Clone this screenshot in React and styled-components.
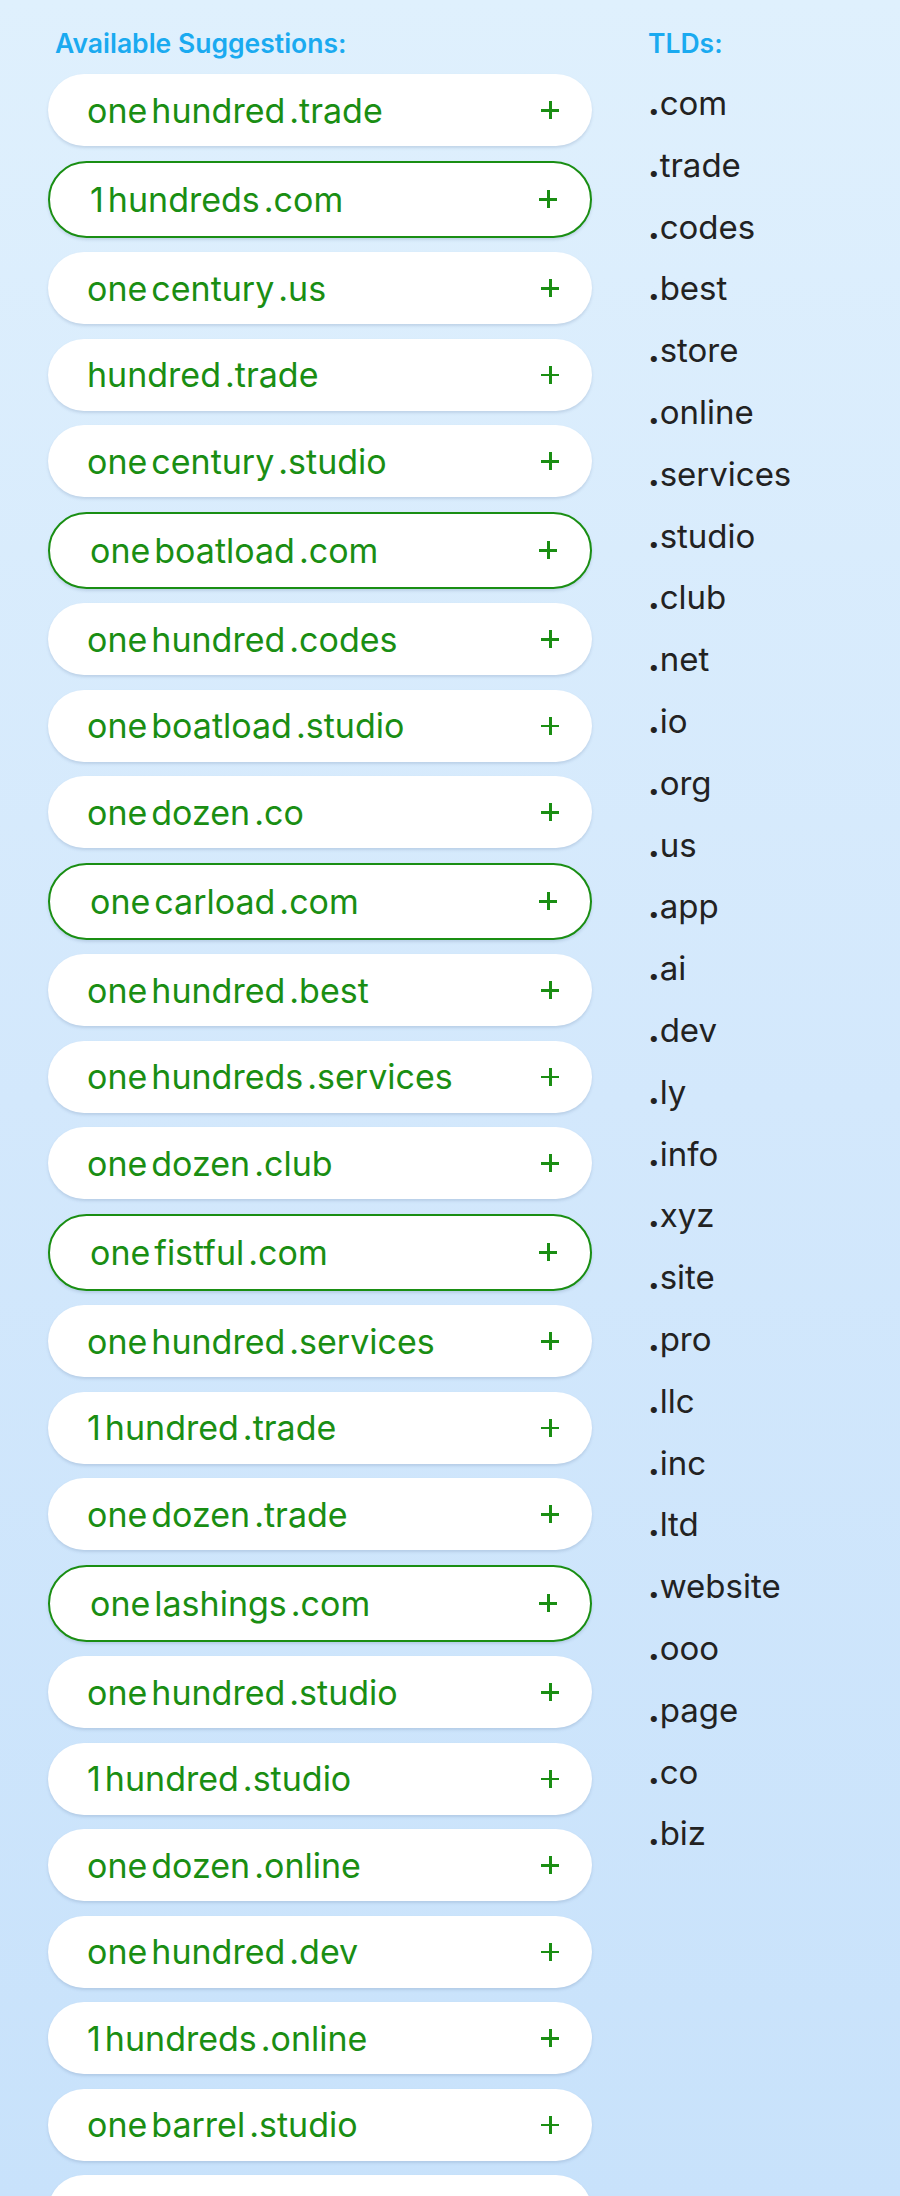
import React from 'react'
import styled, { createGlobalStyle } from 'styled-components'

const suggestions = [
  { parts: ['one', 'hundred', '.trade'] },
  { parts: ['1', 'hundreds', '.com'], picked: true },
  { parts: ['one', 'century', '.us'] },
  { parts: ['hundred', '.trade'] },
  { parts: ['one', 'century', '.studio'] },
  { parts: ['one', 'boatload', '.com'], picked: true },
  { parts: ['one', 'hundred', '.codes'] },
  { parts: ['one', 'boatload', '.studio'] },
  { parts: ['one', 'dozen', '.co'] },
  { parts: ['one', 'carload', '.com'], picked: true },
  { parts: ['one', 'hundred', '.best'] },
  { parts: ['one', 'hundreds', '.services'] },
  { parts: ['one', 'dozen', '.club'] },
  { parts: ['one', 'fistful', '.com'], picked: true },
  { parts: ['one', 'hundred', '.services'] },
  { parts: ['1', 'hundred', '.trade'] },
  { parts: ['one', 'dozen', '.trade'] },
  { parts: ['one', 'lashings', '.com'], picked: true },
  { parts: ['one', 'hundred', '.studio'] },
  { parts: ['1', 'hundred', '.studio'] },
  { parts: ['one', 'dozen', '.online'] },
  { parts: ['one', 'hundred', '.dev'] },
  { parts: ['1', 'hundreds', '.online'] },
  { parts: ['one', 'barrel', '.studio'] },
  { parts: ['one', 'dozen', '.studio'] },
]

const tlds = [
  'com', 'trade', 'codes', 'best', 'store', 'online', 'services', 'studio',
  'club', 'net', 'io', 'org', 'us', 'app', 'ai', 'dev', 'ly', 'info', 'xyz',
  'site', 'pro', 'llc', 'inc', 'ltd', 'website', 'ooo', 'page', 'co', 'biz',
]

const GlobalStyle = createGlobalStyle`
  html, body {
    margin: 0;
    padding: 0;
    overflow: hidden;
  }
  body {
    font-family: Inter, 'Noto Sans', sans-serif;
  }
`

const App = () => (
  <Page>
    <GlobalStyle />
    <Columns>
      <Suggestions>
        <Heading $indent>Available Suggestions:</Heading>
        <PillList>
          {suggestions.map((s, i) => (
            <Pill key={i} $picked={s.picked}>
              <Name>
                {s.parts.map((p, j) => (
                  <Part key={j}>{p}</Part>
                ))}
              </Name>
              <Plus />
            </Pill>
          ))}
        </PillList>
      </Suggestions>
      <TldColumn>
        <Heading>TLDs:</Heading>
        <TldList>
          {tlds.map((t) => (
            <Tld key={t}>
              <Dot>.</Dot>
              {t}
            </Tld>
          ))}
        </TldList>
      </TldColumn>
    </Columns>
  </Page>
)

const Page = styled.div`
  height: 2196px;
  overflow: hidden;
  background: linear-gradient(180deg, #dff0fd 0%, #d3e8fc 50%, #c8e2fb 100%);
`

const Columns = styled.div`
  display: grid;
  grid-template-columns: 544px 1fr;
  column-gap: 56px;
  padding: 26px 0 0 48px;
`

const Suggestions = styled.section`
  display: flex;
  flex-direction: column;
`

const TldColumn = styled.section`
  display: flex;
  flex-direction: column;
`

const Heading = styled.h2`
  margin: 0 0 0 ${(p) => (p.$indent ? '7px' : '0')};
  height: 34px;
  line-height: 34px;
  font-size: 26.5px;
  font-weight: 600;
  color: #1aaaf0;
`

const PillList = styled.div`
  display: flex;
  flex-direction: column;
  gap: 14.5px;
  margin-top: 14px;
`

const Pill = styled.div`
  box-sizing: border-box;
  display: flex;
  align-items: center;
  justify-content: space-between;
  height: ${(p) => (p.$picked ? '77px' : '72px')};
  padding: 0 33px 0 ${(p) => (p.$picked ? '40px' : '39px')};
  background: #ffffff;
  border-radius: 40px;
  border: ${(p) => (p.$picked ? '2.5px solid #1a8e13' : 'none')};
  box-shadow: 0 2px 3px rgba(90, 120, 160, 0.22);
  color: #1a8e13;
`

const Name = styled.div`
  display: flex;
  align-items: baseline;
  font-size: 34px;
`

const Part = styled.span`
  margin-right: 4px;
`

const Plus = styled.span`
  position: relative;
  width: 18px;
  height: 18px;
  &::before,
  &::after {
    content: '';
    position: absolute;
    background: #1a8e13;
  }
  &::before {
    left: 0;
    right: 0;
    top: 8px;
    height: 2.5px;
  }
  &::after {
    top: 0;
    bottom: 0;
    left: 8px;
    width: 2.5px;
  }
`

const TldList = styled.div`
  display: flex;
  flex-direction: column;
  margin-top: 13px;
`

const Tld = styled.div`
  height: 61.8px;
  line-height: 61.8px;
  font-size: 33px;
  color: #222222;
`

const Dot = styled.span`
  font-weight: 800;
`

export default App
